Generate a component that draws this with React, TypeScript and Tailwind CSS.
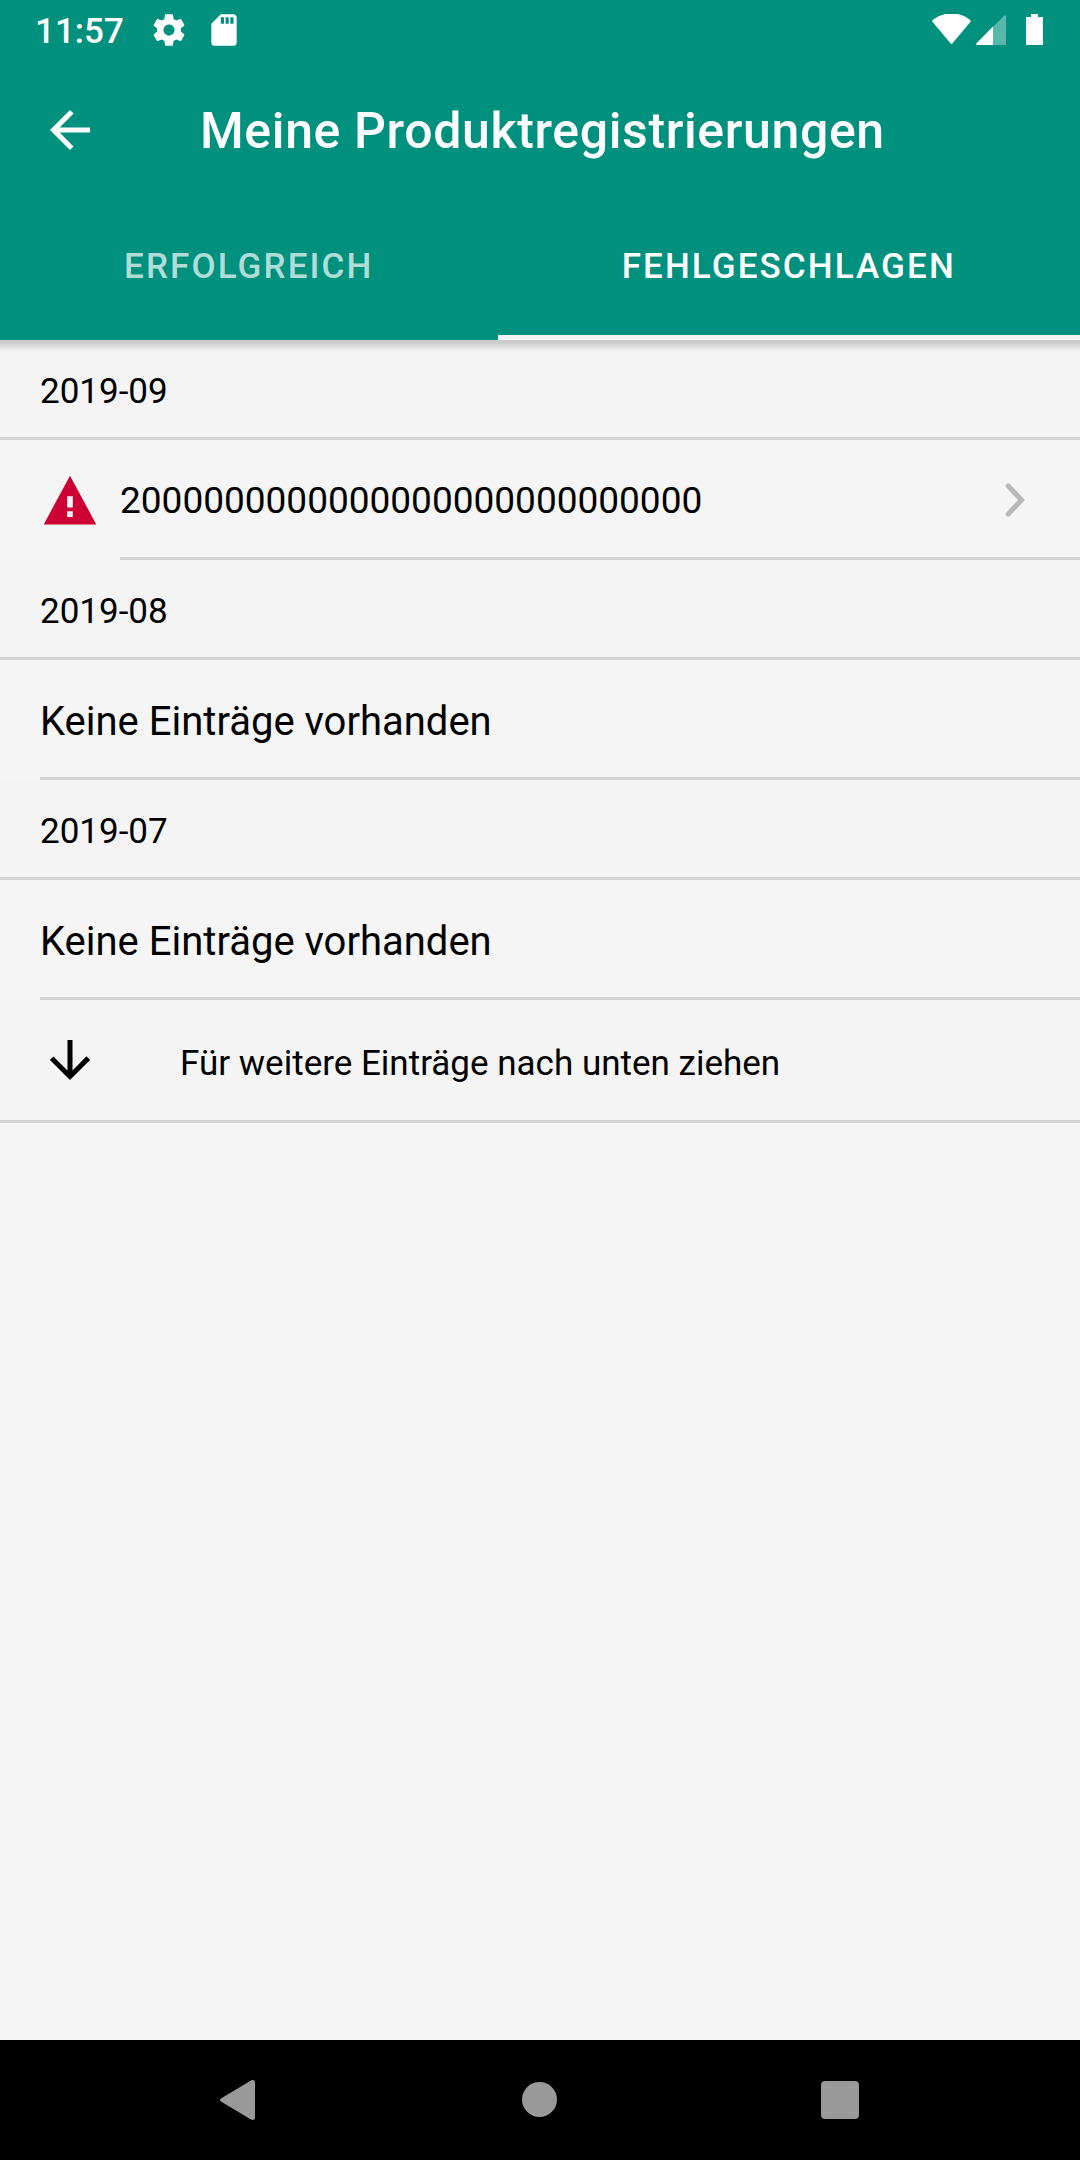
import type { ReactNode } from 'react'

type Section = {
    month: string
    entry?: string
}

const sections: Section[] = [
    { month: '2019-09', entry: '2000000000000000000000000000' },
    { month: '2019-08' },
    { month: '2019-07' },
]

const StatusBar = () => {
    return (
        <div className="flex h-15 items-center justify-between pl-[35px] pr-[37px]">
            <div className="flex items-center">
                <span className="pt-[3px] text-[35px] leading-[40px] font-medium">11:57</span>
                <svg viewBox="0 0 24 24" fill="currentColor" className="ml-[26px] size-[38px]" aria-hidden="true">
                    <path d="M19.43 12.98c.04-.32.07-.64.07-.98s-.03-.66-.07-.98l2.11-1.65c.19-.15.24-.42.12-.64l-2-3.46c-.12-.22-.39-.3-.61-.22l-2.49 1c-.52-.4-1.08-.73-1.69-.98l-.38-2.65C14.46 2.18 14.25 2 14 2h-4c-.25 0-.46.18-.49.42l-.38 2.65c-.61.25-1.17.59-1.69.98l-2.49-1c-.23-.09-.49 0-.61.22l-2 3.46c-.13.22-.07.49.12.64l2.11 1.65c-.04.32-.07.65-.07.98s.03.66.07.98l-2.11 1.65c-.19.15-.24.42-.12.64l2 3.46c.12.22.39.3.61.22l2.49-1c.52.4 1.08.73 1.69.98l.38 2.65c.03.24.24.42.49.42h4c.25 0 .46-.18.49-.42l.38-2.65c.61-.25 1.17-.59 1.69-.98l2.49 1c.23.09.49 0 .61-.22l2-3.46c.12-.22.07-.49-.12-.64l-2.11-1.65zM12 15.5c-1.93 0-3.5-1.57-3.5-3.5s1.57-3.5 3.5-3.5 3.5 1.57 3.5 3.5-1.57 3.5-3.5 3.5z" />
                </svg>
                <svg viewBox="0 0 24 24" fill="currentColor" className="ml-[17px] size-[38px]" aria-hidden="true">
                    <path d="M18 2h-8L4.02 8 4 20c0 1.1.9 2 2 2h12c1.1 0 2-.9 2-2V4c0-1.1-.9-2-2-2zm-6 6h-2V4h2v4zm3 0h-2V4h2v4zm3 0h-2V4h2v4z" />
                </svg>
            </div>
            <div className="flex items-center">
                {/* wifi */}
                <svg viewBox="0 0 39 32" fill="currentColor" className="h-8 w-[39px]" aria-hidden="true">
                    <path d="M.8 6C6 1.600 12.500-.6 19.500-.6s13.500 2.200 18.700 6.600c.6.500.7 1.300.2 1.900L20.500 29.300c-.6.700-1.400.7-2 0L.6 7.900C.1 7.300.2 6.500.8 6z" />
                </svg>
                {/* mobile signal, half strength */}
                <svg viewBox="0 0 30 32" fill="currentColor" className="ml-[5px] h-8 w-[30px]" aria-hidden="true">
                    <path opacity=".35" d="M17 13 28.500 1.300c.7-.7 1.500-.3 1.500.7V31H17z" />
                    <path d="M17 12.500V31H1c-1 0-1.200-1-.5-1.700z" />
                </svg>
                {/* battery */}
                <svg viewBox="0 0 17 32" fill="currentColor" className="ml-5 h-8 w-[17px]" aria-hidden="true">
                    <path d="M5 0h7v3h5v28H0V3h5z" />
                </svg>
            </div>
        </div>
    )
}

const Tab = ({ selected, children }: { selected?: boolean; children: ReactNode }) => {
    return (
        <button
            type="button"
            role="tab"
            aria-selected={selected ? true : false}
            className={
                selected
                    ? 'flex-auto border-b-5 border-[#f4f4f4] pb-[2px] text-white'
                    : 'flex-auto border-b-5 border-transparent pb-[2px] text-white/70'
            }
        >
            <span className="text-[35px] leading-[40px] font-medium tracking-[0.06em]">{children}</span>
        </button>
    )
}

const MonthHeader = ({ children }: { children: ReactNode }) => {
    return (
        <h2 className="flex h-[100px] items-center border-b-3 border-[#d4d4d4] bg-[#f4f4f4] px-10 pt-[6px] text-[35px] leading-[40px]">
            {children}
        </h2>
    )
}

const App = () => {
    return (
        <div className="flex min-h-screen flex-col bg-[#f5f5f5] font-[Roboto,sans-serif] text-black">
            <header className="relative bg-[#00917e] text-white">
                <StatusBar />
                <div className="flex h-[140px] items-center px-10">
                    <button type="button" aria-label="Zurück">
                        <svg viewBox="0 0 512 512" fill="currentColor" className="size-15">
                            <path d="M427 234.625H167.296l119.702-119.702L256 85 85 256l171 171 29.922-29.924-118.626-119.701H427v-42.750z" />
                        </svg>
                    </button>
                    <h1 className="ml-25 pt-[2px] text-[50px] leading-[60px] font-medium tracking-[0.0125em]">Meine Produktregistrierungen</h1>
                </div>
                <div role="tablist" className="flex h-[140px]">
                    <Tab>ERFOLGREICH</Tab>
                    <Tab selected>FEHLGESCHLAGEN</Tab>
                </div>
                <div className="absolute inset-x-0 top-full h-3 bg-linear-to-b from-black/17 from-20% to-transparent" />
            </header>

            <main className="flex-1">
                {sections.map((section) => (
                    <section key={section.month}>
                        <MonthHeader>{section.month}</MonthHeader>
                        {section.entry ? (
                            <a href="#details" className="flex h-[120px] pl-10">
                                <div className="flex w-20 items-center">
                                    <svg viewBox="0 0 512 512" className="size-15 fill-[#cc0033]" aria-hidden="true">
                                        <path d="M32 464h448L256 48 32 464zm248-64h-48v-48h48v48zm0-80h-48v-96h48v96z" />
                                    </svg>
                                </div>
                                <div className="flex flex-1 items-center justify-between border-b-3 border-[#d4d4d4] pt-[3px] pr-[50px]">
                                    <span className="pt-[2px] text-[37px] leading-[50px]">{section.entry}</span>
                                    <svg viewBox="0 0 30 40" fill="none" stroke="#b8b8b8" strokeWidth="5" strokeLinecap="round" className="h-10 w-[30px]" aria-hidden="true">
                                        <path d="M8.200 6 21.500 20 8.200 34" />
                                    </svg>
                                </div>
                            </a>
                        ) : (
                            <div className="h-[120px] pl-10">
                                <p className="flex h-full items-center border-b-3 border-[#d4d4d4] pt-[6px] text-[40px] leading-[50px]">
                                    Keine Einträge vorhanden
                                </p>
                            </div>
                        )}
                    </section>
                ))}
                <div className="flex h-[123px] items-center border-b-3 border-[#d4d4d4] bg-[#f4f4f4] px-10">
                    <svg viewBox="0 0 512 512" fill="currentColor" className="size-15" aria-hidden="true">
                        <path d="M277.375 85v259.704l119.702-119.702L427 256 256 427 85 256l29.924-29.922 119.701 118.626V85h42.750z" />
                    </svg>
                    <p className="ml-20 pt-[8px] text-[35px] leading-[40px]">Für weitere Einträge nach unten ziehen</p>
                </div>
            </main>

            {/* Android navigation */}
            <nav className="flex h-[120px] items-center justify-center gap-60 bg-black text-[#999999]">
                <button type="button" aria-label="Zurück">
                    <svg viewBox="0 0 60 60" fill="currentColor" className="size-15">
                        <path d="M10.900 28.600 41 10.500c1.800-1 4-.3 4 1.800v35.400c0 2.100-2.200 2.800-4 1.800L10.900 31.400c-1.200-.7-1.200-2.100 0-2.800z" />
                    </svg>
                </button>
                <button type="button" aria-label="Startbildschirm">
                    <svg viewBox="0 0 60 60" fill="currentColor" className="size-15">
                        <circle cx="29.500" cy="29.500" r="17.500" />
                    </svg>
                </button>
                <button type="button" aria-label="Übersicht">
                    <svg viewBox="0 0 60 60" fill="currentColor" className="size-15">
                        <rect x="11" y="11" width="38" height="38" rx="4" />
                    </svg>
                </button>
            </nav>
        </div>
    )
}

export default App
